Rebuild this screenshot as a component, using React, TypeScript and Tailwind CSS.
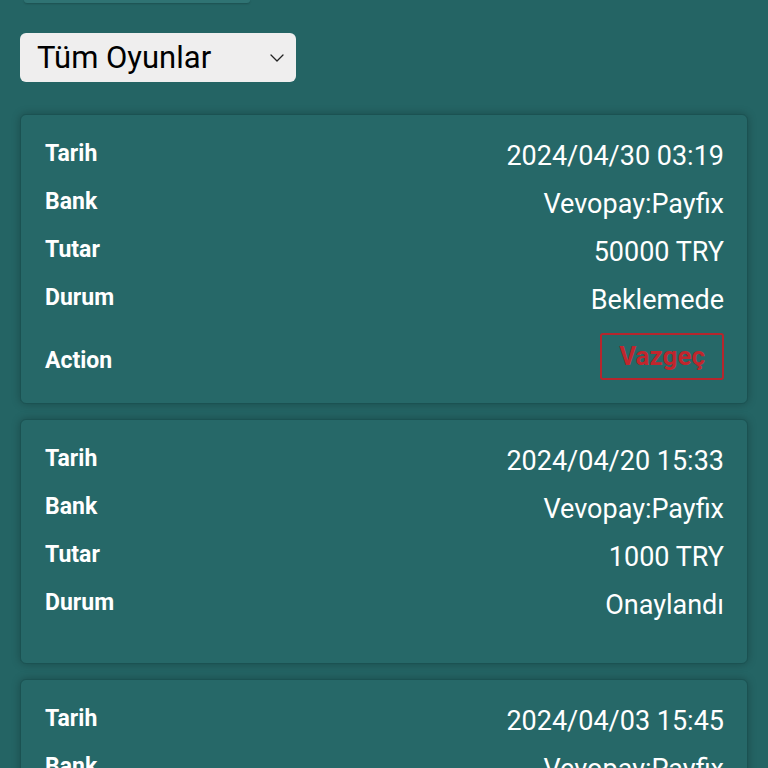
import { ChevronDown } from 'lucide-react';

interface Deposit {
    date: string;
    bank: string;
    amount: string;
    status: string;
    cancellable: boolean;
}

const deposits: Deposit[] = [
    { date: '2024/04/30 03:19', bank: 'Vevopay:Payfix', amount: '50000 TRY', status: 'Beklemede', cancellable: true },
    { date: '2024/04/20 15:33', bank: 'Vevopay:Payfix', amount: '1000 TRY', status: 'Onaylandı', cancellable: false },
    { date: '2024/04/03 15:45', bank: 'Vevopay:Payfix', amount: '1000 TRY', status: 'Onaylandı', cancellable: false },
];

function Row({ label, value }: { label: string; value: string }) {
    return (
        <div className="flex h-12 items-center justify-between">
            <span className="text-[23px] font-bold text-white">{label}</span>
            <span className="pt-1 text-[27px] text-white">{value}</span>
        </div>
    );
}

export default function App() {
    return (
        <div
            className="min-h-screen bg-[#246464] px-5"
            style={{ fontFamily: 'Roboto, "Noto Sans", sans-serif' }}
        >
            {/* tail of the tab bar above */}
            <div className="mx-[4px] h-[3px] w-[226px] rounded-b-sm bg-[#2f7373] shadow-[0_1px_2px_rgba(0,0,0,0.2)]" />

            {/* Game filter */}
            <div className="pt-[30px]">
                <div className="flex h-[49px] w-[276px] items-center justify-between rounded-md bg-[#efeeee] pl-[17px] pr-[7px]">
                    <span className="text-[31px] leading-none text-black">Tüm Oyunlar</span>
                    <ChevronDown className="h-6 w-6 text-[#222]" strokeWidth={1.3} />
                </div>
            </div>

            {/* Deposit list */}
            <div className="mt-[32px] flex flex-col gap-[15px]">
                {deposits.map((d, i) => (
                    <div
                        key={i}
                        className="rounded-md border border-[#1b5252] bg-[#266868] pl-6 pr-[23px] pt-[15px] pb-[21px] shadow-[0_0_8px_rgba(0,0,0,0.25)]"
                    >
                        <Row label="Tarih" value={d.date} />
                        <Row label="Bank" value={d.bank} />
                        <Row label="Tutar" value={d.amount} />
                        <Row label="Durum" value={d.status} />
                        {d.cancellable ? (
                            <div className="mt-[10px] mb-[2px] flex h-12 items-center justify-between">
                                <span className="pt-[10px] text-[23px] font-bold text-white">Action</span>
                                <button className="h-[47px] rounded-[3px] border-2 border-[#b5262d] px-[17px] text-[26px] font-bold text-[#c0262d]">
                                    Vazgeç
                                </button>
                            </div>
                        ) : (
                            <div className="h-[15px]" />
                        )}
                    </div>
                ))}
            </div>
        </div>
    );
}
